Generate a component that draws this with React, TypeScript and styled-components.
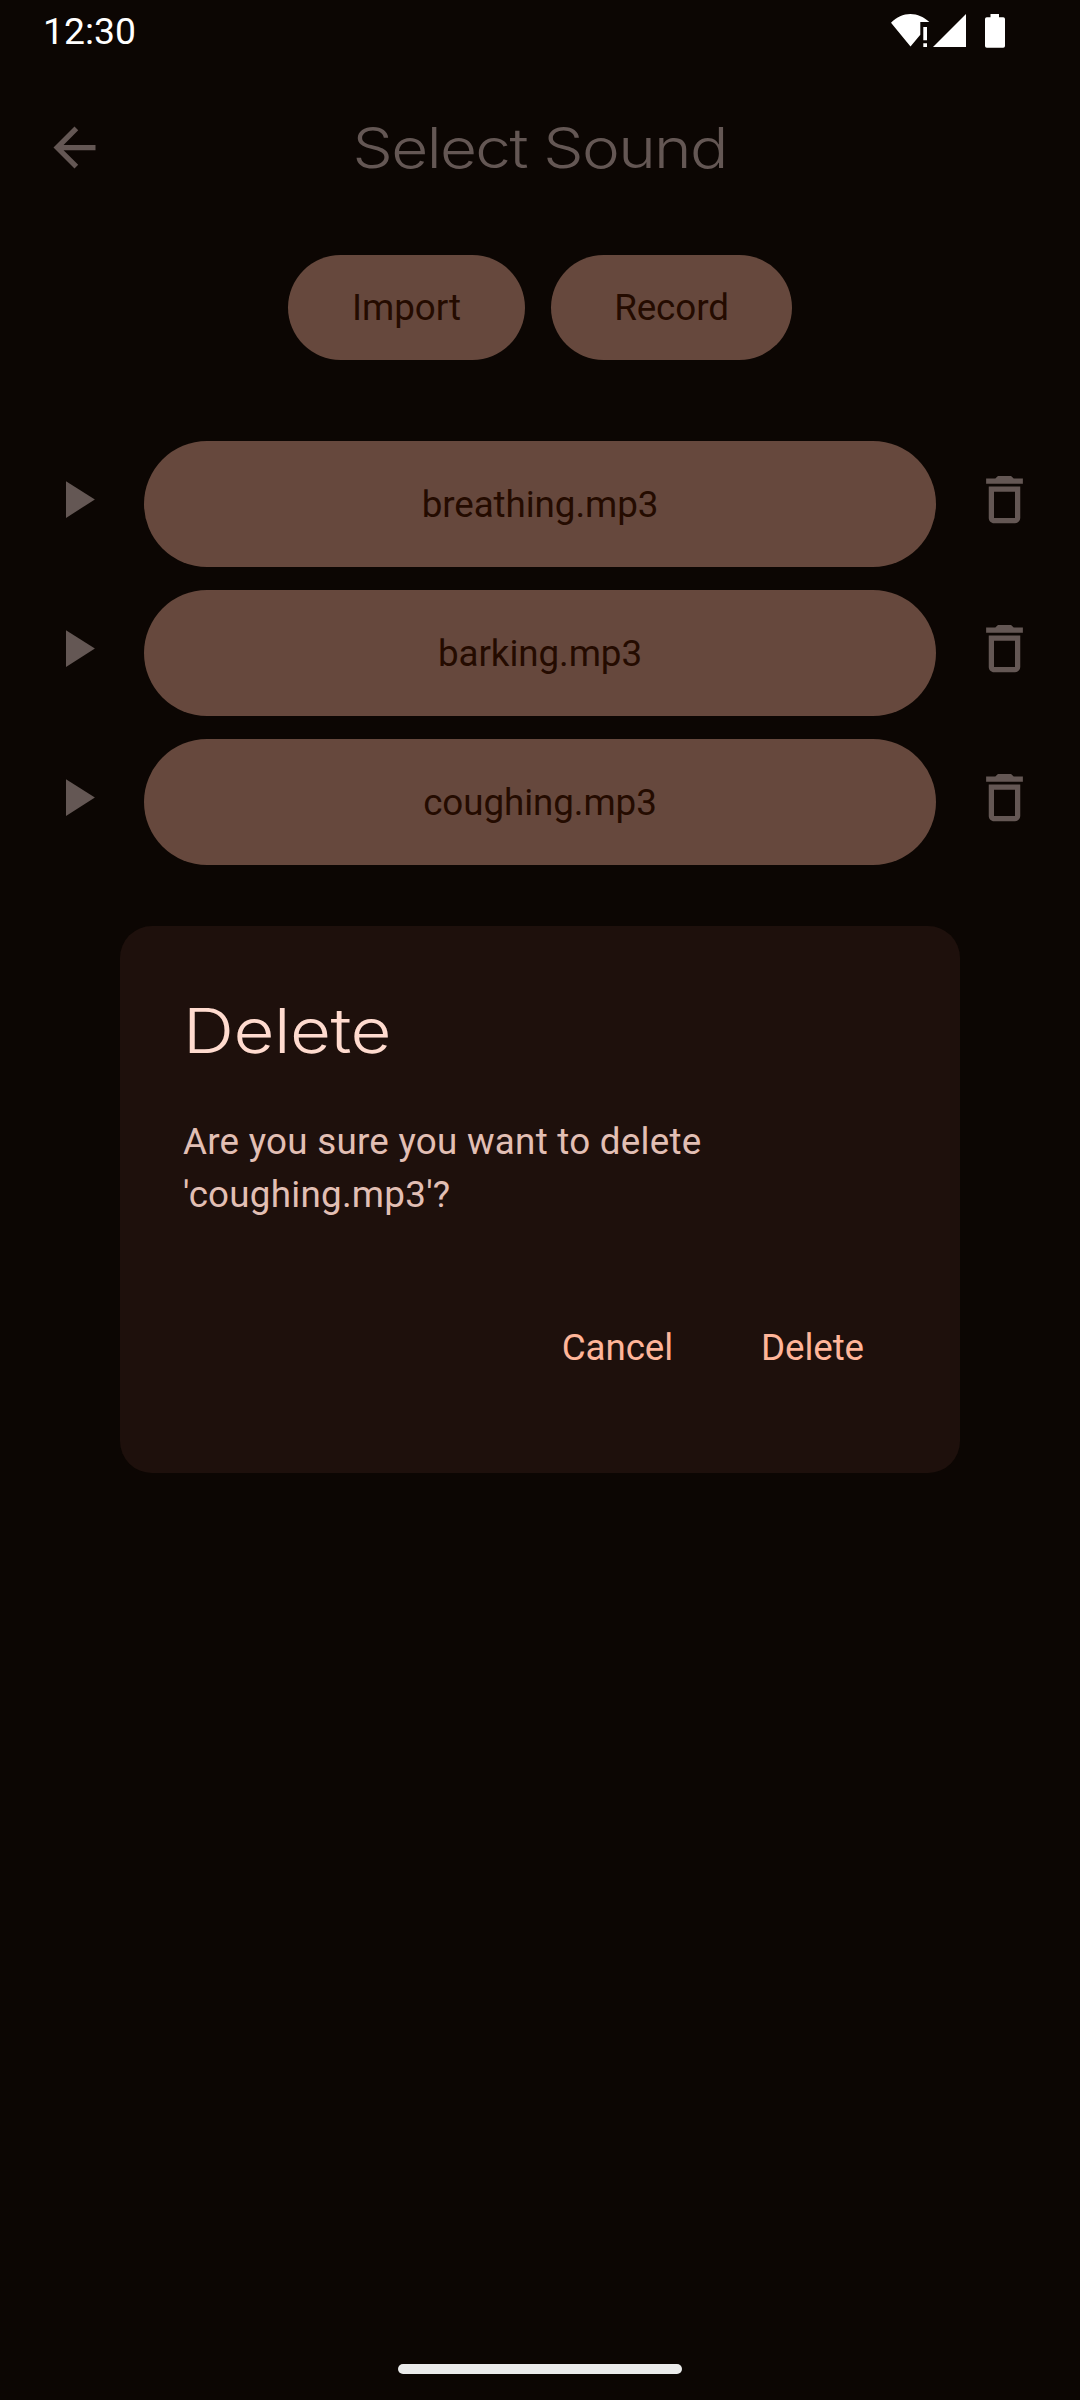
import React from "react";
import styled, { createGlobalStyle } from "styled-components";

const color = {
  background: "#0c0603",
  muted: "#645754",
  pill: "#66483d",
  onPill: "#240b00",
  dialog: "#1e100c",
  heading: "#ffdbcf",
  body: "#e2bfb4",
  action: "#ffb599",
};

const GlobalStyle = createGlobalStyle`
  *, *::before, *::after { box-sizing: border-box; }
  body {
    margin: 0;
    background: ${color.background};
    font-family: Roboto, "Noto Sans", sans-serif;
    font-size: 36.75px;
    line-height: 52.5px;
  }
  button { border: 0; background: none; padding: 0; font: inherit; color: inherit; }
`;

const Screen = styled.div`
  width: 1080px;
  height: 2400px;
  display: flex;
  flex-direction: column;
  overflow: hidden;
  background: ${color.background};
`;

const StatusBar = styled.header`
  height: 63px;
  flex: none;
  display: flex;
  justify-content: space-between;
  padding: 0 75px 0 43px;
  color: #fff;
`;

const Clock = styled.span`
  font-size: 37.3px;
  line-height: 63px;
`;

const StatusIcons = styled.svg`
  display: block;
  width: 114px;
  height: 63px;
`;

const AppBar = styled.nav`
  height: 169px;
  flex: none;
  display: grid;
  grid-template-columns: 63px 1fr 63px;
  align-items: center;
  padding: 0 44px 0 43px;
  color: ${color.muted};
`;

const Icon = styled.svg`
  display: block;
  width: 63px;
  height: 63px;
  fill: currentColor;
`;

const Display = styled.span<{ $size: number; $tracking: number; $origin: string }>`
  display: inline-block;
  font-family: Inter, "Open Sans", sans-serif;
  font-weight: 350;
  font-size: ${(p) => p.$size}px;
  letter-spacing: ${(p) => p.$tracking}px;
  line-height: 84px;
  white-space: nowrap;
  transform: scaleX(1.15);
  transform-origin: ${(p) => p.$origin} center;
`;

const ScreenTitle = styled.h1`
  margin: 0;
  font-weight: 400;
  text-align: center;
`;

const SourceActions = styled.div`
  flex: none;
  display: flex;
  justify-content: center;
  gap: 26px;
  margin-top: 23px;
`;

const Pill = styled.button<{ $width: number; $height: number }>`
  width: ${(p) => p.$width}px;
  height: ${(p) => p.$height}px;
  flex: none;
  display: flex;
  align-items: center;
  justify-content: center;
  padding-top: 2px;
  border-radius: ${(p) => p.$height / 2}px;
  background: ${color.pill};
  color: ${color.onPill};
  letter-spacing: -0.07px;
`;

const SoundList = styled.ul`
  list-style: none;
  margin: 81px 0 0;
  padding: 0 44px 0 45px;
  display: flex;
  flex-direction: column;
  gap: 23px;
`;

const SoundRow = styled.li`
  display: grid;
  grid-template-columns: 99px 1fr 63px;
  align-items: start;
`;

const IconButton = styled.button`
  margin-top: 27px;
  color: ${color.muted};
`;

const NavArea = styled.footer`
  flex: none;
  height: 36px;
  margin-top: auto;
  display: flex;
  justify-content: center;
  align-items: flex-start;
`;

const NavHandle = styled.div`
  width: 284px;
  height: 10px;
  border-radius: 5px;
  background: #ebebeb;
`;

const Overlay = styled.div`
  position: absolute;
  top: 0;
  left: 0;
  width: 1080px;
  height: 2400px;
  display: flex;
  align-items: center;
  justify-content: center;
  padding-bottom: 1px;
`;

const Dialog = styled.section`
  width: 840px;
  height: 547px;
  padding: 63px;
  border-radius: 32px;
  background: ${color.dialog};
`;

const DialogTitle = styled.h2`
  margin: 0;
  font-weight: 400;
  height: 84px;
  color: ${color.heading};
`;

const DialogText = styled.p`
  margin: 43px 0 0;
  color: ${color.body};
  letter-spacing: 0.26px;
`;

const DialogActions = styled.div`
  display: flex;
  justify-content: flex-end;
  gap: 88px;
  margin-top: 101px;
  padding-right: 33px;
  color: ${color.action};
`;

const TextButton = styled.button`
  flex: none;
  letter-spacing: -0.1px;
`;

const icons = {
  back: "M20 11H7.83l5.59-5.59L12 4l-8 8 8 8 1.41-1.41L7.83 13H20v-2z",
  play: "M8 5v14l11-7z",
  trash:
    "M6 19c0 1.1.9 2 2 2h8c1.1 0 2-.9 2-2V7H6v12zM8 9h8v10H8V9zm7.5-5l-1-1h-5l-1 1H5v2h14V4h-3.5z",
};

const Glyph = ({ name }: { name: keyof typeof icons }) => (
  <Icon viewBox="0 0 24 24" aria-hidden>
    <path d={icons[name]} />
  </Icon>
);

const sounds = ["breathing.mp3", "barking.mp3", "coughing.mp3"];

export default function App() {
  return (
    <>
      <GlobalStyle />
      <Screen>
        <StatusBar>
          <Clock>12:30</Clock>
          <StatusIcons viewBox="891 0 114 63" fill="#fff" aria-hidden>
            <path d="M891 22.8C896.500 17 903.500 14 910.300 14C917.500 14 924 17 929.300 22H920.300V34.800L910.500 46.600Z" />
            <path d="M923.300 27h3.700v13.300h-3.700zM923.300 43.300h3.700v3.700h-3.700z" />
            <path d="M966 14v33h-33z" />
            <path d="M990.500 14h8.500v3.300h4.200q1.800 0 1.800 1.800v26.900q0 1.800-1.800 1.800h-16.400q-1.800 0-1.800-1.800v-26.900q0-1.800 1.800-1.800h3.700z" />
          </StatusIcons>
        </StatusBar>
        <AppBar>
          <button aria-label="Back">
            <Glyph name="back" />
          </button>
          <ScreenTitle>
            <Display $size={55.5} $tracking={-1.4} $origin="center">
              Select Sound
            </Display>
          </ScreenTitle>
        </AppBar>
        <SourceActions>
          <Pill $width={237} $height={105}>Import</Pill>
          <Pill $width={241} $height={105}>Record</Pill>
        </SourceActions>
        <SoundList>
          {sounds.map((name) => (
            <SoundRow key={name}>
              <IconButton aria-label={`Play ${name}`}>
                <Glyph name="play" />
              </IconButton>
              <Pill $width={792} $height={126}>{name}</Pill>
              <IconButton aria-label={`Delete ${name}`}>
                <Glyph name="trash" />
              </IconButton>
            </SoundRow>
          ))}
        </SoundList>
        <NavArea>
          <NavHandle />
        </NavArea>
      </Screen>
      <Overlay>
        <Dialog role="dialog">
          <DialogTitle>
            <Display $size={61.5} $tracking={-0.4} $origin="left">
              Delete
            </Display>
          </DialogTitle>
          <DialogText>
            Are you sure you want to delete
            <br />
            'coughing.mp3'?
          </DialogText>
          <DialogActions>
            <TextButton>Cancel</TextButton>
            <TextButton>Delete</TextButton>
          </DialogActions>
        </Dialog>
      </Overlay>
    </>
  );
}
